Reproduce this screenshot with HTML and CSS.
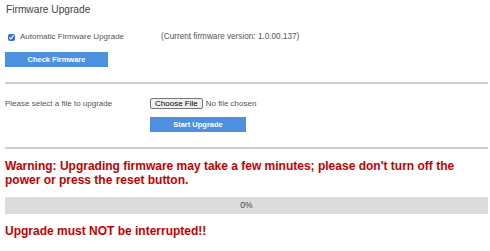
FILE: index.html
```html
<!DOCTYPE html>
<html lang="en">
<head>
    <meta charset="UTF-8">
    <meta name="viewport" content="width=device-width, initial-scale=1.0">
    <title>Firmware Upgrade</title>
    <link rel="stylesheet" href="styles.css">
</head>
<body>

<div id="upgradePage">
    <h1 class="pageTitle">Firmware Upgrade</h1>

    <!-- Automatic upgrade -->
    <div class="row autoRow">
        <label class="autoLabel"><input type="checkbox" id="autoUpgrade" checked> Automatic Firmware Upgrade</label>
        <span class="versionText">(Current firmware version: 1.0.00.137)</span>
    </div>
    <button class="blueButton checkButton">Check Firmware</button>

    <hr class="divider">

    <!-- Manual upgrade -->
    <div class="row fileRow">
        <span class="fileLabel">Please select a file to upgrade</span>
        <input type="file" id="firmwareFile" class="fileInput">
    </div>
    <button class="blueButton startButton">Start Upgrade</button>

    <hr class="divider">

    <p class="warningText">Warning: Upgrading firmware may take a few minutes; please don't turn off the power or press the reset button.</p>

    <div class="progressBar">
        <div class="progressFill" style="width: 0%"></div>
        <span class="progressText">0%</span>
    </div>

    <p class="warningText finalWarning">Upgrade must NOT be interrupted!!</p>
</div>

</body>
</html>
```

FILE: styles.css
```css
/* Firmware upgrade page */
body {
    margin: 0;
    background: #fff;
    font-family: "Liberation Sans", Arial, sans-serif;
    color: #555;
}
#upgradePage {
    width: 483px;
    margin-left: 5px;
    padding-top: 3px;
}
.pageTitle {
    margin: 0 0 0 1px;
    font-size: 10.2px;
    font-weight: normal;
    line-height: 14px;
    color: #444;
}
.row {
    display: flex;
    align-items: center;
    font-size: 8px;
    line-height: 12px;
}
.autoRow {
    margin-top: 14px;
}
.autoLabel {
    display: flex;
    align-items: center;
    width: 156px;
    color: #555;
}
.versionText {
    font-size: 8.2px;
}
#autoUpgrade {
    width: 7px;
    height: 7px;
    margin: 0 5px 0 3px;
    accent-color: #2f6fd6;
}
.blueButton {
    display: block;
    border: none;
    background: #4d90e0;
    color: #fff;
    font-family: "Liberation Sans", Arial, sans-serif;
    font-size: 7.5px;
    font-weight: bold;
    padding: 0;
    cursor: pointer;
}
.checkButton {
    width: 103px;
    height: 15px;
    margin-top: 9px;
}
.divider {
    border: none;
    height: 2px;
    background: #cfcfcf;
    margin: 15px 0 0 0;
}
.fileRow {
    margin-top: 14px;
    height: 11px;
}
.fileLabel {
    width: 145px;
}
.fileInput {
    font-family: "Liberation Sans", Arial, sans-serif;
    font-size: 8px;
    color: #555;
    height: 11px;
    padding: 0;
}
.fileInput::file-selector-button {
    font-family: "Liberation Sans", Arial, sans-serif;
    font-size: 8px;
    height: 11px;
    padding: 0 4px;
    margin-right: 3px;
    border: 1px solid #767676;
    border-radius: 2px;
    background: #efefef;
    color: #000;
}
.startButton {
    width: 96px;
    height: 15px;
    margin: 8px 0 0 145px;
}
.warningText {
    margin: 10px 0 0 0;
    font-size: 12px;
    font-weight: bold;
    line-height: 14px;
    color: #c40000;
}
.progressBar {
    position: relative;
    height: 17px;
    margin-top: 10px;
    background: #dcdcdc;
}
.progressFill {
    height: 100%;
    background: #4d90e0;
}
.progressText {
    position: absolute;
    top: 0;
    left: 0;
    width: 100%;
    line-height: 17px;
    text-align: center;
    font-size: 8.5px;
    color: #444;
}
.finalWarning {
    margin-top: 10px;
}
```
